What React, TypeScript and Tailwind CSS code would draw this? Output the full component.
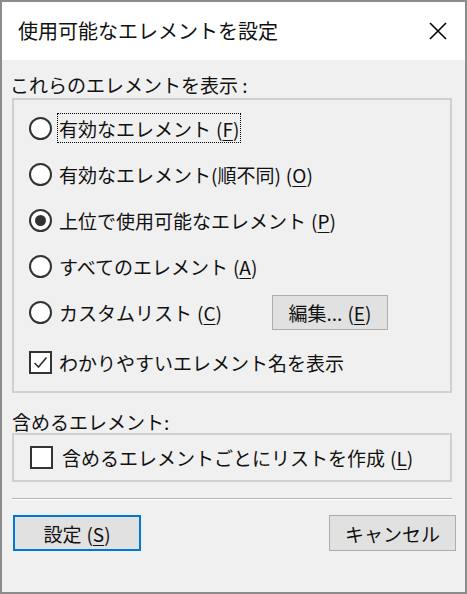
import React from "react";

const font = { fontFamily: '"Noto Sans CJK JP", "Noto Sans", sans-serif' };

function Radio({ checked }: { checked?: boolean }) {
  return (
    <span className="w-[23px] h-[23px] rounded-full border-2 border-[#333333] bg-white flex items-center justify-center shrink-0">
      {checked && <span className="w-[11px] h-[11px] rounded-full bg-[#333333]" />}
    </span>
  );
}

function Check({ checked }: { checked?: boolean }) {
  return (
    <span className="w-[23px] h-[23px] border-2 border-[#333333] bg-white flex items-center justify-center shrink-0">
      {checked && (
        <svg width="17" height="17" viewBox="0 0 17 17">
          <path d="M2.5 9 L6.5 13 L14.5 3.5" fill="none" stroke="#333" strokeWidth="1.7" />
        </svg>
      )}
    </span>
  );
}

function Key({ k }: { k: string }) {
  return (
    <span className="ml-[5px]">
      (<span className="underline underline-offset-[3px]">{k}</span>)
    </span>
  );
}

export default function App() {
  const rows = [
    { label: "有効なエレメント", key: "F", focus: true },
    { label: "有効なエレメント(順不同)", key: "O" },
    { label: "上位で使用可能なエレメント", key: "P", checked: true },
    { label: "すべてのエレメント", key: "A" },
  ];

  return (
    <div
      className="w-[467px] h-[594px] border-2 border-[#8c8c8c] bg-[#f0f0f0] flex flex-col text-[#111111] text-[19px] leading-none"
      style={font}
    >
      {/* Title bar */}
      <div className="h-[58px] bg-white flex items-center justify-between pl-[16px] pr-[17px] shrink-0">
        <span className="text-[20px]">使用可能なエレメントを設定</span>
        <svg width="20" height="20" viewBox="0 0 20 20">
          <path d="M2 2 L18 18 M18 2 L2 18" stroke="#000" strokeWidth="1.6" />
        </svg>
      </div>

      {/* Body */}
      <div className="flex flex-col pl-[10px]">
        <div className="h-[24px] mt-[12px] flex items-center -ml-[2px]">
          これらのエレメントを表示 :
        </div>

        <div className="w-[440px] h-[295px] mt-[2px] border-2 border-[#d0d0d0] flex flex-col pl-[15px] pt-[5px]">
          {rows.map((r) => (
            <div key={r.key} className="h-[46px] flex items-center">
              <Radio checked={r.checked} />
              {r.focus ? (
                <span className="ml-[5px] h-[30px] px-[1px] flex items-center border border-dotted border-black">
                  {r.label}
                  <Key k={r.key} />
                </span>
              ) : (
                <span className="ml-[7px] flex items-center">
                  {r.label}
                  <Key k={r.key} />
                </span>
              )}
            </div>
          ))}
          <div className="h-[46px] flex items-center">
            <div className="w-[243px] flex items-center">
              <Radio />
              <span className="ml-[7px]">
                カスタムリスト
                <Key k="C" />
              </span>
            </div>
            <button className="w-[116px] h-[35px] border border-[#adadad] bg-[#e1e1e1] flex items-center justify-center">
              編集...
              <Key k="E" />
            </button>
          </div>
          <div className="h-[46px] mt-[4px] flex items-center">
            <Check checked />
            <span className="ml-[7px]">わかりやすいエレメント名を表示</span>
          </div>
        </div>

        <div className="h-[24px] mt-[16px] flex items-center">含めるエレメント:</div>

        <div className="w-[440px] h-[49px] border-2 border-[#d0d0d0] flex items-center pl-[16px]">
          <Check />
          <span className="ml-[9px]">
            含めるエレメントごとにリストを作成
            <Key k="L" />
          </span>
        </div>

        <div className="w-[440px] mt-[16px] border-t border-[#b4b4b4] border-b border-b-white" />

        <div className="flex justify-between items-center mt-[15px] pl-[1px] pr-[9px]">
          <button className="w-[128px] h-[36px] border-2 border-[#0078d7] bg-[#e1e1e1] flex items-center justify-center">
            設定
            <Key k="S" />
          </button>
          <button className="w-[127px] h-[36px] border border-[#adadad] bg-[#e1e1e1] flex items-center justify-center">
            キャンセル
          </button>
        </div>
      </div>
    </div>
  );
}
